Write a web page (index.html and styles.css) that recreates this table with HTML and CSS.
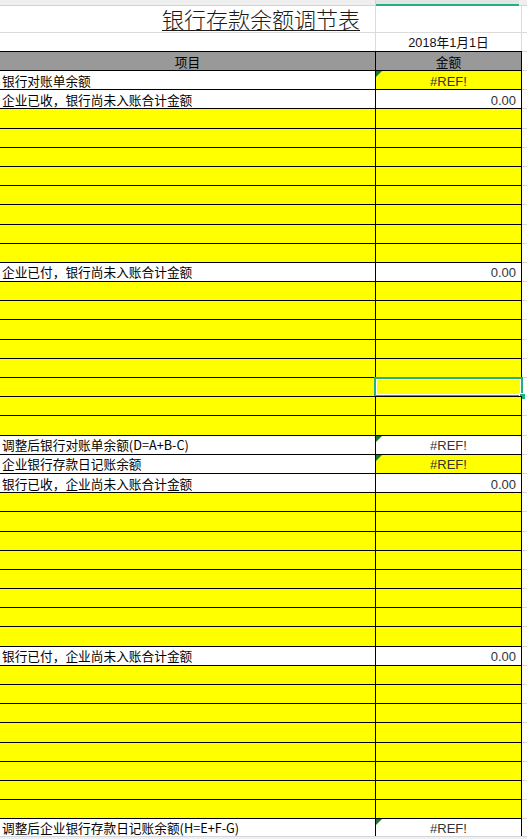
FILE: index.html
```html
<!DOCTYPE html>
<html lang="zh-CN">
<head>
<meta charset="utf-8">
<title>银行存款余额调节表</title>
<link rel="stylesheet" href="styles.css">
</head>
<body>
<div class="sheet">
  <div class="topbar"><div class="th-a"></div><div class="th-b"></div><div class="th-c"></div></div>

  <div class="title-row">
    <div class="g g-a"></div><div class="g g-b"></div><div class="g g-c"></div>
    <div class="title"><span>银行存款余额调节表</span></div>
  </div>

  <div class="date-row">
    <div class="g g-a"></div>
    <div class="g g-b date">2018年1月1日</div>
    <div class="g g-c"></div>
  </div>

  <div class="row head">
    <div class="a ctr">项目</div><div class="b ctr">金额</div><div class="c"></div>
  </div>

  <div class="row"><div class="a">银行对账单余额</div><div class="b num ctr y"><i class="flag"></i>#REF!</div><div class="c"></div></div>
  <div class="row"><div class="a">企业已收，银行尚未入账合计金额</div><div class="b num rt">0.00</div><div class="c"></div></div>
  <div class="row fill"><div class="a"></div><div class="b"></div><div class="c"></div></div>
  <div class="row fill"><div class="a"></div><div class="b"></div><div class="c"></div></div>
  <div class="row fill"><div class="a"></div><div class="b"></div><div class="c"></div></div>
  <div class="row fill"><div class="a"></div><div class="b"></div><div class="c"></div></div>
  <div class="row fill"><div class="a"></div><div class="b"></div><div class="c"></div></div>
  <div class="row fill"><div class="a"></div><div class="b"></div><div class="c"></div></div>
  <div class="row fill"><div class="a"></div><div class="b"></div><div class="c"></div></div>
  <div class="row fill"><div class="a"></div><div class="b"></div><div class="c"></div></div>

  <div class="row"><div class="a">企业已付，银行尚未入账合计金额</div><div class="b num rt">0.00</div><div class="c"></div></div>
  <div class="row fill"><div class="a"></div><div class="b"></div><div class="c"></div></div>
  <div class="row fill"><div class="a"></div><div class="b"></div><div class="c"></div></div>
  <div class="row fill"><div class="a"></div><div class="b"></div><div class="c"></div></div>
  <div class="row fill"><div class="a"></div><div class="b"></div><div class="c"></div></div>
  <div class="row fill"><div class="a"></div><div class="b"></div><div class="c"></div></div>
  <div class="row fill"><div class="a"></div><div class="b selected"><span class="sel"><span class="handle"></span></span></div><div class="c"></div></div>
  <div class="row fill"><div class="a"></div><div class="b"></div><div class="c"></div></div>
  <div class="row fill"><div class="a"></div><div class="b"></div><div class="c"></div></div>

  <div class="row"><div class="a">调整后银行对账单余额(D=A+B-C)</div><div class="b num ctr"><i class="flag"></i>#REF!</div><div class="c"></div></div>
  <div class="row"><div class="a">企业银行存款日记账余额</div><div class="b num ctr y"><i class="flag"></i>#REF!</div><div class="c"></div></div>
  <div class="row"><div class="a">银行已收，企业尚未入账合计金额</div><div class="b num rt">0.00</div><div class="c"></div></div>
  <div class="row fill"><div class="a"></div><div class="b"></div><div class="c"></div></div>
  <div class="row fill"><div class="a"></div><div class="b"></div><div class="c"></div></div>
  <div class="row fill"><div class="a"></div><div class="b"></div><div class="c"></div></div>
  <div class="row fill"><div class="a"></div><div class="b"></div><div class="c"></div></div>
  <div class="row fill"><div class="a"></div><div class="b"></div><div class="c"></div></div>
  <div class="row fill"><div class="a"></div><div class="b"></div><div class="c"></div></div>
  <div class="row fill"><div class="a"></div><div class="b"></div><div class="c"></div></div>
  <div class="row fill"><div class="a"></div><div class="b"></div><div class="c"></div></div>

  <div class="row"><div class="a">银行已付，企业尚未入账合计金额</div><div class="b num rt">0.00</div><div class="c"></div></div>
  <div class="row fill"><div class="a"></div><div class="b"></div><div class="c"></div></div>
  <div class="row fill"><div class="a"></div><div class="b"></div><div class="c"></div></div>
  <div class="row fill"><div class="a"></div><div class="b"></div><div class="c"></div></div>
  <div class="row fill"><div class="a"></div><div class="b"></div><div class="c"></div></div>
  <div class="row fill"><div class="a"></div><div class="b"></div><div class="c"></div></div>
  <div class="row fill"><div class="a"></div><div class="b"></div><div class="c"></div></div>
  <div class="row fill"><div class="a"></div><div class="b"></div><div class="c"></div></div>
  <div class="row fill"><div class="a"></div><div class="b"></div><div class="c"></div></div>

  <div class="row last"><div class="a">调整后企业银行存款日记账余额(H=E+F-G)</div><div class="b num ctr"><i class="flag"></i>#REF!</div><div class="c"></div></div>

  <div class="statusbar"></div>
</div>
</body>
</html>
```

FILE: styles.css
```css
html, body {
  margin: 0;
  padding: 0;
  background: #ffffff;
}
body {
  width: 527px;
  height: 839px;
  overflow: hidden;
  font-family: "Noto Sans CJK SC", "Liberation Sans", sans-serif;
  font-size: 12.7px;
  color: #000;
}
.sheet {
  width: 527px;
}

/* column header strip */
.topbar {
  display: flex;
  height: 6px;
}
.th-a, .th-c {
  box-sizing: border-box;
  background: #efefef;
  border-bottom: 1px solid #d3d3d3;
}
.th-a { width: 376px; border-right: 1px solid #d3d3d3; }
.th-b {
  box-sizing: border-box;
  width: 143px;
  background: #e4e4e4;
  border-bottom: 2px solid #22b07d;
}
.th-c { flex: 1; }

/* title + date rows (light grid) */
.title-row, .date-row {
  display: grid;
  grid-template-columns: 376px 146px 1fr;
}
.title-row { height: 27px; }
.date-row { height: 18px; }
.g {
  box-sizing: border-box;
  grid-row: 1;
  border-bottom: 1px solid #dadada;
}
.g-a { grid-column: 1; border-right: 1px solid #dadada; }
.g-b { grid-column: 2; border-right: 1px solid #dadada; }
.g-c { grid-column: 3; }
.date-row .g { border-bottom: none; }
.title {
  grid-row: 1;
  grid-column: 1 / 3;
  align-self: start;
  text-align: center;
  font-size: 22px;
  line-height: 24px;
  font-weight: 300;
  color: #1a1a1a;
}
.title span {
  text-decoration: underline;
  text-decoration-thickness: 1px;
  text-underline-offset: 2px;
}
.date {
  font-family: "Liberation Sans", "Noto Sans CJK SC", sans-serif;
  text-align: center;
  line-height: 19px;
  padding-top: 1px;
  color: #111;
}

/* bordered table rows */
.row {
  display: flex;
  height: 19.2px;
}
.row.head { height: 19px; }
.a, .b {
  box-sizing: border-box;
  position: relative;
  border-top: 1px solid #000;
  border-right: 1px solid #000;
  display: flex;
  align-items: center;
  white-space: nowrap;
  overflow: visible;
}
.a {
  width: 376px;
  padding-left: 2px;
}
.b {
  width: 146px;
  padding-right: 5px;
}
.c {
  flex: 1;
  box-sizing: border-box;
  border-top: 1px solid #dadada;
}
.head .a, .head .b {
  background: #999999;
  justify-content: center;
  padding: 0;
}
.ctr { justify-content: center; }
.rt { justify-content: flex-end; }
.num {
  font-family: "Liberation Sans", "Noto Sans CJK SC", sans-serif;
  font-size: 13px;
  color: #333;
  padding-top: 2px;
}
.b.ctr { padding-right: 0; }
.y { background: #ffff00; }
.fill .a, .fill .b { background: #ffff00; }

.row.last { height: 17.2px; }

/* error indicator triangle (overlay in cell corner) */
.flag {
  position: absolute;
  left: 0;
  top: 0;
  width: 0;
  height: 0;
  border-top: 6px solid #1d7a2c;
  border-right: 6px solid transparent;
}

/* active cell selection overlay */
.sel {
  position: absolute;
  left: -2px;
  top: -1px;
  right: -2px;
  bottom: -1px;
  border: 2px solid #22b07d;
  box-shadow: inset 0 0 0 1px #ffffff;
}
.handle {
  position: absolute;
  right: -5px;
  bottom: -5px;
  width: 5px;
  height: 5px;
  background: #22b07d;
  border: 1px solid #ffffff;
}

.statusbar {
  height: 8px;
  background: #eef0f3;
  border-top: 1px solid #d4d6da;
}
```
